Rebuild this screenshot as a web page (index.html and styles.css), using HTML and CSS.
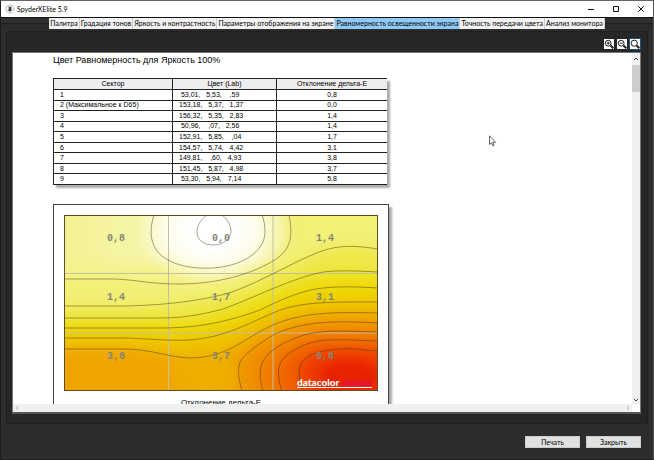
FILE: index.html
```
<!DOCTYPE html>
<html lang="ru">
<head>
<meta charset="utf-8">
<title>SpyderXElite 5.9</title>
<link rel="stylesheet" href="styles.css">
</head>
<body>
<header class="titlebar">
  <svg class="app-icon" viewBox="0 0 10 10" aria-hidden="true"><circle cx="5" cy="5" r="4" fill="#f4f4f4" stroke="#999" stroke-width=".8" stroke-dasharray="2 .6"/><path d="M3.600 2.800h2.200l.8.9-.5 1 .6 1.100-.8 1.400H3.800l-.5-1 .6-1.400z" fill="#222"/><path d="M4.600 3.900h.8M4.600 5.900h.8" stroke="#fff" stroke-width=".6"/></svg>
  <h1>SpyderXElite 5.9</h1>
  <div class="window-buttons">
    <button aria-label="Свернуть"><svg viewBox="0 0 8 8"><path d="M1 4.500h6"/></svg></button>
    <button aria-label="Развернуть"><svg viewBox="0 0 8 8"><path d="M1.500 1.500h5v5h-5z"/></svg></button>
    <button aria-label="Закрыть окно"><svg viewBox="0 0 8 8"><path d="M1.200 1.200l5.600 5.600M6.800 1.200L1.200 6.800"/></svg></button>
  </div>
</header>
<main class="workspace">
  <nav class="tabs">
    <button>Палитра</button>
    <button>Градация тонов</button>
    <button>Яркость и контрастность</button>
    <button>Параметры отображения на экране</button>
    <button class="active">Равномерность освещенности экрана</button>
    <button>Точность передачи цвета</button>
    <button>Анализ монитора</button>
  </nav>
  <section class="panel">
    <div class="toolbar">
      <button aria-label="Увеличить"><svg viewBox="0 0 10 10"><circle cx="4.200" cy="4.200" r="2.900"/><path d="M6.500 6.500L9.300 9.300" class="handle"/><path d="M2.700 4.200h3M4.200 2.700v3" class="sign"/></svg></button>
      <button aria-label="Уменьшить"><svg viewBox="0 0 10 10"><circle cx="4.200" cy="4.200" r="2.900"/><path d="M6.500 6.500L9.300 9.300" class="handle"/><path d="M2.700 4.200h3" class="sign"/></svg></button>
      <button class="selected" aria-label="По размеру"><svg viewBox="0 0 10 10"><circle cx="4.200" cy="4.200" r="3.100"/><path d="M6.500 6.500L9.300 9.300" class="handle"/></svg></button>
    </div>
    <div class="viewer">
      <article class="report">
        <h2>Цвет Равномерность для Яркость 100%</h2>
        <table>
          <colgroup><col class="col-sector"><col class="col-lab"><col class="col-delta"></colgroup>
          <thead><tr><th>Сектор</th><th>Цвет (Lab)</th><th>Отклонение дельта-E</th></tr></thead>
          <tbody>
            <tr><td>1</td><td> 53,01,   5,53,    ,59</td><td>0,8</td></tr>
            <tr><td>2 (Максимальное к D65)</td><td>153,18,   5,37,   1,37</td><td>0,0</td></tr>
            <tr><td>3</td><td>156,32,   5,35,   2,83</td><td>1,4</td></tr>
            <tr><td>4</td><td> 50,96,    ,07,   2,56</td><td>1,4</td></tr>
            <tr><td>5</td><td>152,91,   5,85,    ,04</td><td>1,7</td></tr>
            <tr><td>6</td><td>154,57,   5,74,   4,42</td><td>3,1</td></tr>
            <tr><td>7</td><td>149,81,    ,60,   4,93</td><td>3,8</td></tr>
            <tr><td>8</td><td>151,45,   5,87,   4,98</td><td>3,7</td></tr>
            <tr><td>9</td><td> 53,30,   5,94,   7,14</td><td>5,8</td></tr>
          </tbody>
        </table>
        <figure class="chart">
          <svg viewBox="0 0 314 176" role="img" aria-label="Карта равномерности">
            <defs>
              <linearGradient id="base"><stop offset="0" stop-color="#f4f294"/><stop offset=".3" stop-color="#f7f6ac"/><stop offset=".65" stop-color="#f5f39a"/><stop offset="1" stop-color="#efee6c"/></linearGradient>
              <radialGradient id="peak"><stop offset=".3" stop-color="#fff"/><stop offset=".6" stop-color="#fff" stop-opacity=".8"/><stop offset="1" stop-color="#fff" stop-opacity="0"/></radialGradient>
              <filter id="soft" x="-20%" y="-20%" width="140%" height="140%"><feGaussianBlur stdDeviation="6"/></filter>
              <path id="k1" d="M143 0C136 5 133 11 133 17C133 25 140 30 149 30C160 30 167 23 167 16C167 10 163 4 158 0"/>
              <path id="k2" d="M90 0C83 22 89 37 104 45C120 54 145 55 163 51C190 45 201 30 201 17C201 10 200 5 198 0"/>
              <path id="k3" d="M-30 64H50C75 65 85 69 115 69C145 69 180 63 209 46C228 35 229 20 225 0V-30H344V210H-30Z"/>
              <path id="k4" d="M-30 91H60C110 90 145 84 168 77C205 63 225 49 255 37C275 29 295 31 314 34L344 36V210H-30Z"/>
              <path id="k5" d="M-30 103H95C125 103 143 98 159 94C185 85 230 62 259 57C275 55 295 56 314 57H344V210H-30Z"/>
              <path id="k6" d="M-30 113H95C125 113 155 110 196 95C220 83 240 75 259 73C280 71 295 72 314 73H344V210H-30Z"/>
              <path id="k7" d="M-30 123H60C90 124 105 126 125 125C160 123 185 108 209 98C235 86 270 87 314 87H344V210H-30Z"/>
              <path id="k8" d="M-30 134H60C88 134 106 143 128 143C165 142 180 123 209 110C239 97 270 97 314 98H344V210H-30Z"/>
              <path id="k9" d="M180 210L178 176C175 165 173 155 176 147C181 138 195 129 209 120C240 105 275 106 314 108H344V210Z"/>
              <path id="k10" d="M203 210L199 176C195 163 195 151 201 143C209 132 228 123 244 119C265 114 295 117 314 117H344V210Z"/>
              <path id="k11" d="M221 210L218 176C213 162 213 150 220 143C230 132 250 125 265 125C285 124 300 126 314 126H344V210Z"/>
              <path id="k12" d="M246 210L240 176C234 163 233 152 240 145C248 137 261 135 278 134C292 133 305 136 314 136H344V210Z"/>
            </defs>
            <rect width="314" height="176" fill="url(#base)"/>
            <g filter="url(#soft)">
              <rect x="-30" y="48" width="374" height="20" fill="#f4f28c"/>
              <use href="#k3" fill="#f2f074"/>
              <use href="#k4" fill="#efe848"/>
              <use href="#k5" fill="#ecdf14"/>
              <use href="#k6" fill="#edd200"/>
              <use href="#k7" fill="#efbf00"/>
              <use href="#k8" fill="#f0a400"/>
              <ellipse cx="142" cy="158" rx="35" ry="20" fill="#eeae00"/>
              <use href="#k9" fill="#f09000"/>
              <use href="#k10" fill="#f07a00"/>
              <use href="#k11" fill="#f06000"/>
              <use href="#k12" fill="#ef3a00"/>
              <ellipse cx="286" cy="162" rx="32" ry="18" fill="#e82000"/>
            </g>
            <ellipse cx="148" cy="16" rx="76" ry="54" fill="url(#peak)"/>
            <path d="M104.500 0V176M209 0V176M0 58.500H314M0 118H314" class="grid-lines"/>
            <g class="contours"><use href="#k1"/><use href="#k2"/><use href="#k3"/><use href="#k4"/><use href="#k5"/><use href="#k6"/><use href="#k7"/><use href="#k8"/><use href="#k9"/><use href="#k10"/><use href="#k11"/><use href="#k12"/></g>
            <g class="values">
              <text x="52" y="26">0,8</text><text x="157" y="26">0,0</text><text x="261" y="26">1,4</text>
              <text x="52" y="85">1,4</text><text x="157" y="85">1,7</text><text x="261" y="85">3,1</text>
              <text x="52" y="144">3,8</text><text x="157" y="144">3,7</text><text x="261" y="144">5,8</text>
            </g>
            <path d="M278 166H308V171H278Z" fill="#e6142d"/>
            <path d="M233 172.500H308" stroke="#fff"/>
            <text x="233" y="171" class="brand">datacolor</text>
            <rect x=".5" y=".5" width="313" height="175" fill="none" stroke="#5d4d20"/>
          </svg>
          <figcaption>Отклонение дельта-E</figcaption>
        </figure>
      </article>
      <div class="vscroll"><svg viewBox="0 0 8 8"><path d="M2 5l2-2 2 2"/></svg><span class="thumb"></span><svg viewBox="0 0 8 8"><path d="M2 3l2 2 2-2"/></svg></div>
      <div class="hscroll"><svg viewBox="0 0 8 8"><path d="M5 2L3 4l2 2"/></svg><svg viewBox="0 0 8 8"><path d="M3 2l2 2-2 2"/></svg></div>
    </div>
  </section>
  <footer class="actions"><button>Печать</button><button>Закрыть</button></footer>
</main>
<svg class="pointer" viewBox="0 0 8 12" aria-hidden="true"><path d="M.5.8v8.700l2-1.800 1.300 3.200 1.300-.6-1.300-3h2.700z" fill="#fff" stroke="#222" stroke-width=".7"/></svg>
</body>
</html>
```
FILE: styles.css
```
* { box-sizing: border-box; }

body {
  margin: 0;
  height: 100vh;
  display: flex;
  flex-direction: column;
  overflow: hidden;
  background: #2d2d2d;
  border: 1px solid #1c1c1c;
  border-top-color: #666;
  border-right-color: #555;
  font: 7px/9px Lato, "Noto Sans", sans-serif;
  color: #000;
}

button {
  margin: 0;
  padding: 0;
  border: 0;
  font: inherit;
  color: inherit;
}

svg { display: block; }

.titlebar {
  height: 16px;
  flex: none;
  display: flex;
  align-items: center;
  gap: 2px;
  padding-left: 4px;
  background: #fff;
}

.app-icon { width: 10px; height: 10px; }

h1 { margin: 0; font: inherit; }

.window-buttons { margin-left: auto; display: flex; }

.window-buttons button {
  width: 25px;
  height: 16px;
  display: grid;
  place-items: center;
  background: none;
}

.window-buttons svg {
  width: 8px;
  height: 8px;
  fill: none;
  stroke: #111;
  stroke-width: 1;
}

.workspace {
  flex: 1;
  min-height: 0;
  display: flex;
  flex-direction: column;
  padding: 0 5px;
  border-top: 1px solid #111;
}

.tabs {
  display: flex;
  justify-content: center;
  height: 11px;
  flex: none;
  margin: 0 -5px;
  background: linear-gradient(#303030 0 5px, #1f1f1f 5px 6px, #2a2a2a 6px);
}

.tabs button {
  padding: 0 1px;
  background: #f2f2f2;
  border-right: 1px solid #ccc;
  white-space: nowrap;
}

.tabs .active { background: #91c9f7; }

.panel {
  flex: 1;
  min-height: 0;
  display: flex;
  flex-direction: column;
  margin-top: 2px;
  padding: 6px 6px 9px 5px;
  background: #262626;
  border: 1px solid #202020;
  border-radius: 2px;
}

.toolbar {
  display: flex;
  justify-content: flex-end;
  align-items: flex-start;
  gap: 1px;
  height: 14px;
  flex: none;
}

.toolbar button {
  width: 12px;
  height: 12px;
  background: #fff;
  border: 1px solid #262626;
}

.toolbar .selected { border-color: #1d4f7c; }

.toolbar svg { width: 100%; height: 100%; fill: #fff; stroke: #222; stroke-width: 1; }

.toolbar .handle { stroke-width: 2; }

.viewer {
  flex: 1;
  min-height: 0;
  display: grid;
  grid-template: minmax(0, 1fr) 8px / minmax(0, 1fr) 8px;
  background: #fff;
  border: 1px solid #777;
  border-width: 1px 1px 2px;
  border-bottom-color: #555;
}

.report {
  overflow: hidden;
  padding: 0 40px;
  font: 7px/8px "Liberation Sans", Arial, sans-serif;
}

h2 { margin: 1px 0 12px; font-size: 9px; line-height: 12px; font-weight: 400; }

table {
  width: 100%;
  max-width: 334px;
  height: 107px;
  table-layout: fixed;
  border-collapse: collapse;
  box-shadow: 3px 3px 2px #aaa;
  background: #fff;
}

.col-sector { width: 119px; }
.col-lab { width: 104px; }

th, td {
  padding: 0 6px;
  font-weight: 400;
  border-bottom: 1px solid #222;
  border-left: 1px solid #222;
}

th { height: 11px; background: #eee; border-top: 1px solid #222; }

td { white-space: pre; }

td:last-child { text-align: center; }

.chart {
  margin: 19px 0 0;
  max-width: 336px;
  padding: 10px;
  border: 1px solid #444;
  box-shadow: 3px 3px 2px #aaa;
  text-align: center;
}

.chart svg { width: 100%; }

.chart figcaption { margin-top: 7px; font-size: 8px; line-height: 10px; }

.grid-lines { stroke: #c4c0a0; stroke-width: 1; }

.contours { fill: none; stroke: #402800; stroke-opacity: .55; stroke-width: .8; }

.values {
  font: bold 10px "Liberation Mono", monospace;
  text-anchor: middle;
  fill: #858578;
}

.brand { font: 900 10px Lato, sans-serif; fill: #fff; }

.vscroll, .hscroll {
  display: flex;
  background: #f0f0f0;
}

.vscroll { flex-direction: column; }

.hscroll { justify-content: space-between; }

.vscroll svg, .hscroll svg {
  width: 8px;
  height: 8px;
  flex: none;
  fill: none;
  stroke: #444;
  stroke-width: 1;
}

.hscroll svg { stroke: #bbb; }

.vscroll svg:first-child { margin: 2px 0; }

.thumb { height: 27px; background: #cdcdcd; }

.vscroll svg:last-child { margin-top: auto; }

.actions {
  display: flex;
  justify-content: flex-end;
  gap: 6px;
  padding: 12px 7px 11px;
}

.actions button {
  width: 55px;
  height: 12px;
  background: #e1e1e1;
  border: 1px solid #ccc;
  line-height: 10px;
}

.pointer {
  position: absolute;
  left: 489px;
  top: 135px;
  width: 8px;
  height: 12px;
}
```
